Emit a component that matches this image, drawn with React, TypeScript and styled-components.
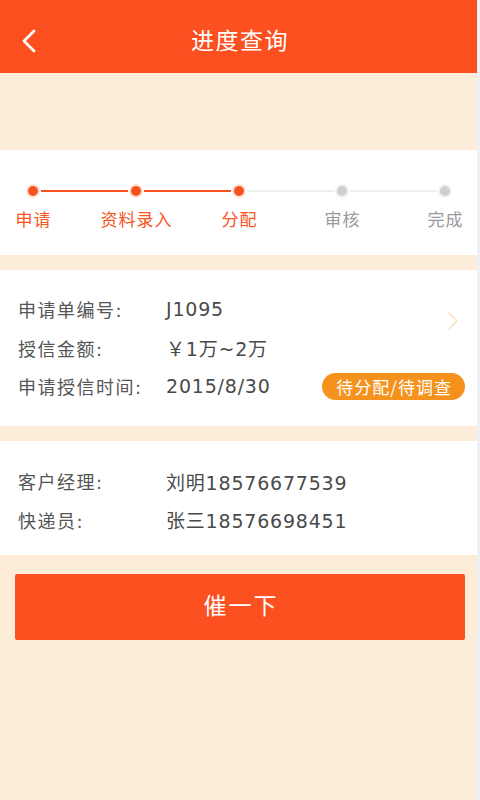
import React from "react";
import styled, { createGlobalStyle } from "styled-components";

const GlobalStyle = createGlobalStyle`
  html, body {
    margin: 0;
    padding: 0;
    background: #eef0f7;
  }
  body {
    font-family: "DejaVu Sans", "Noto Sans CJK SC", sans-serif;
  }
`;

const steps = [
  { label: "申请", done: true },
  { label: "资料录入", done: true },
  { label: "分配", done: true },
  { label: "审核", done: false },
  { label: "完成", done: false },
];

const App = () => {
  return (
    <>
      <GlobalStyle />
      <Page>
        <Header>
          <BackButton aria-label="back">
            <svg width="18" height="26" viewBox="0 0 18 26">
              <path d="M14 3 L4 13 L14 23" fill="none" stroke="#fff" strokeWidth="2.8" strokeLinecap="round" strokeLinejoin="round" />
            </svg>
          </BackButton>
          <Title>进度查询</Title>
        </Header>

        <StepCard>
          <Track>
            {steps.map((s, i) => (
              <StepCol key={s.label}>
                <DotRow>
                  <Line $active={s.done} $hidden={i === 0} />
                  <Dot $active={s.done} />
                  <Line $active={i < steps.length - 1 && steps[i + 1].done} $hidden={i === steps.length - 1} />
                </DotRow>
                <StepLabel $active={s.done}>{s.label}</StepLabel>
              </StepCol>
            ))}
          </Track>
        </StepCard>

        <InfoCard>
          <Row>
            <Label>申请单编号:</Label>
            <Value>J1095</Value>
          </Row>
          <Row>
            <Label>授信金额:</Label>
            <Value>￥1万~2万</Value>
          </Row>
          <Row>
            <Label>申请授信时间:</Label>
            <Value>2015/8/30</Value>
            <Badge>待分配/待调查</Badge>
          </Row>
          <Chevron>
            <svg width="12" height="20" viewBox="0 0 12 20">
              <path d="M2 2 L10 10 L2 18" fill="none" stroke="#fde0c4" strokeWidth="1.6" strokeLinecap="round" strokeLinejoin="round" />
            </svg>
          </Chevron>
        </InfoCard>

        <ContactCard>
          <Row>
            <Label>客户经理:</Label>
            <Value>刘明18576677539</Value>
          </Row>
          <Row>
            <Label>快递员:</Label>
            <Value>张三18576698451</Value>
          </Row>
        </ContactCard>

        <ButtonWrap>
          <UrgeButton>催一下</UrgeButton>
        </ButtonWrap>
      </Page>
    </>
  );
};

const Page = styled.div`
  width: 477px;
  min-height: 800px;
  background: #fcecd8;
  display: flex;
  flex-direction: column;
`;

const Header = styled.div`
  height: 73px;
  background: #fc5021;
  display: flex;
  align-items: center;
  justify-content: center;
  position: relative;
  padding-top: 4px;
  box-sizing: border-box;
`;

const BackButton = styled.div`
  position: absolute;
  left: 20px;
  top: 28px;
  display: flex;
`;

const Title = styled.div`
  color: #fff;
  font-family: "Noto Sans CJK SC", sans-serif;
  font-size: 23px;
  letter-spacing: 1.5px;
  margin-left: 3px;
`;

const StepCard = styled.div`
  margin-top: 77px;
  height: 105px;
  background: #fff;
  padding: 36px 0 0;
  box-sizing: border-box;
`;

const Track = styled.div`
  display: flex;
  margin: 0 -19px;
`;

const StepCol = styled.div`
  flex: 1;
  display: flex;
  flex-direction: column;
  align-items: center;
`;

const DotRow = styled.div`
  width: 100%;
  height: 10px;
  display: flex;
  align-items: center;
`;

const Line = styled.div<{ $active: boolean; $hidden: boolean }>`
  flex: 1;
  height: 2px;
  background: ${(p) => (p.$hidden ? "transparent" : p.$active ? "#f7531f" : "#efefef")};
`;

const Dot = styled.div<{ $active: boolean }>`
  width: 10px;
  height: 10px;
  border-radius: 50%;
  margin: 0 3px;
  background: ${(p) => (p.$active ? "#f7531f" : "#cfcfcf")};
  box-shadow: ${(p) => (p.$active ? "0 0 0 2px #fde3d6" : "0 0 0 2px #f3f3f3")};
`;

const StepLabel = styled.div<{ $active: boolean }>`
  margin-top: 10px;
  font-family: "Noto Sans CJK SC", sans-serif;
  font-size: 17px;
  letter-spacing: 1px;
  padding-left: 2px;
  color: ${(p) => (p.$active ? "#f7541f" : "#9a9a9a")};
`;

const InfoCard = styled.div`
  margin-top: 15px;
  height: 156px;
  background: #fff;
  padding: 20px 0 0 18px;
  box-sizing: border-box;
  display: flex;
  flex-direction: column;
  position: relative;
`;

const ContactCard = styled(InfoCard)`
  height: 114px;
  padding-top: 21px;
`;

const Row = styled.div`
  height: 38.5px;
  display: flex;
  align-items: center;
  font-size: 18px;
  letter-spacing: 1.5px;
  color: #555;
`;

const Label = styled.div`
  width: 148px;
`;

const Value = styled.div`
  flex: 1;
  color: #4a4a4a;
  font-size: 19px;
  letter-spacing: 0.8px;
`;

const Badge = styled.div`
  margin-right: 12px;
  height: 27px;
  padding: 0 13px 0 14px;
  border-radius: 14px;
  background: #f5921e;
  color: #fff;
  font-family: "Noto Sans CJK SC", sans-serif;
  font-size: 17px;
  letter-spacing: 1px;
  display: flex;
  align-items: center;
`;

const Chevron = styled.div`
  position: absolute;
  right: 18px;
  top: 41px;
  display: flex;
`;

const ButtonWrap = styled.div`
  padding: 19px 12px 0 15px;
`;

const UrgeButton = styled.button`
  width: 100%;
  height: 66px;
  border: none;
  border-radius: 2px;
  background: #fc5021;
  color: #fff;
  font-family: "Noto Sans CJK SC", sans-serif;
  font-size: 23px;
  letter-spacing: 2px;
  padding: 0 0 6px 2px;
  cursor: pointer;
`;

export default App;
